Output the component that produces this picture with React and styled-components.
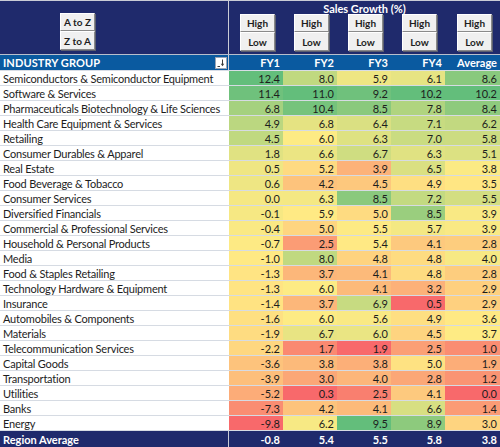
import React from "react";
import styled, { createGlobalStyle } from "styled-components";

const rows = [
  ["Semiconductors & Semiconductor Equipment", 12.4, 8.0, 5.9, 6.1, 8.6],
  ["Software & Services", 11.4, 11.0, 9.2, 10.2, 10.2],
  ["Pharmaceuticals Biotechnology & Life Sciences", 6.8, 10.4, 8.5, 7.8, 8.4],
  ["Health Care Equipment & Services", 4.9, 6.8, 6.4, 7.1, 6.2],
  ["Retailing", 4.5, 6.0, 6.3, 7.0, 5.8],
  ["Consumer Durables & Apparel", 1.8, 6.6, 6.7, 6.3, 5.1],
  ["Real Estate", 0.5, 5.2, 3.9, 6.5, 3.8],
  ["Food Beverage & Tobacco", 0.6, 4.2, 4.5, 4.9, 3.5],
  ["Consumer Services", 0.0, 6.3, 8.5, 7.2, 5.5],
  ["Diversified Financials", -0.1, 5.9, 5.0, 8.5, 3.9],
  ["Commercial & Professional Services", -0.4, 5.0, 5.5, 5.7, 3.9],
  ["Household & Personal Products", -0.7, 2.5, 5.4, 4.1, 2.8],
  ["Media", -1.0, 8.0, 4.8, 4.8, 4.0],
  ["Food & Staples Retailing", -1.3, 3.7, 4.1, 4.8, 2.8],
  ["Technology Hardware & Equipment", -1.3, 6.0, 4.1, 3.2, 2.9],
  ["Insurance", -1.4, 3.7, 6.9, 0.5, 2.9],
  ["Automobiles & Components", -1.6, 6.0, 5.6, 4.9, 3.6],
  ["Materials", -1.9, 6.7, 6.0, 4.5, 3.7],
  ["Telecommunication Services", -2.2, 1.7, 1.9, 2.5, 1.0],
  ["Capital Goods", -3.6, 3.8, 3.8, 5.0, 1.9],
  ["Transportation", -3.9, 3.0, 4.0, 2.8, 1.2],
  ["Utilities", -5.2, 0.3, 2.5, 4.1, 0.0],
  ["Banks", -7.3, 4.2, 4.1, 6.6, 1.4],
  ["Energy", -9.8, 6.2, 9.5, 8.9, 3.0],
];

const averages = [-0.8, 5.4, 5.5, 5.8, 3.8];
const columns = ["FY1", "FY2", "FY3", "FY4", "Average"];

const RED = [248, 105, 107];
const YELLOW = [255, 235, 132];
const GREEN = [99, 190, 123];

const mix = (a, b, t) =>
  `rgb(${a.map((v, i) => Math.round(v + (b[i] - v) * t)).join(",")})`;

// excel style 3-colour scale per column (min / median / max)
const scales = columns.map((_, c) => {
  const vals = rows.map((r) => r[c + 1]).sort((a, b) => a - b);
  const n = vals.length;
  const mid = n % 2 ? vals[(n - 1) / 2] : (vals[n / 2 - 1] + vals[n / 2]) / 2;
  return { min: vals[0], mid, max: vals[n - 1] };
});

const cellColor = (c, v) => {
  const { min, mid, max } = scales[c];
  if (v <= mid) return mix(RED, YELLOW, mid === min ? 1 : (v - min) / (mid - min));
  return mix(YELLOW, GREEN, (v - mid) / (max - mid));
};

const GRID = "229px 54px 54px 54px 54px 55px";
const NAVY = "#1f2a6c";
const BLUE = "#0a5aa0";

const GlobalStyle = createGlobalStyle`
  body {
    margin: 0;
    background: #fff;
    font-family: Lato, "Open Sans", sans-serif;
  }
`;

const Sheet = styled.div`
  width: 500px;
  height: 447px;
  overflow: hidden;
`;

const TopBand = styled.div`
  display: grid;
  grid-template-columns: 229px 271px;
  height: 55px;
  box-sizing: border-box;
  background: ${NAVY};
  border-top: 1px solid #c9ccd6;
  border-bottom: 1px solid #b9bfcc;
`;

const SortCell = styled.div`
  border-right: 1px solid #c9ccd6;
  padding: 12px 0 0 60px;
`;

const ButtonStack = styled.div`
  display: flex;
  flex-direction: column;
  width: 35px;
`;

const FormButton = styled.div`
  height: 18px;
  box-sizing: border-box;
  display: flex;
  align-items: center;
  justify-content: center;
  background: #f0f0f0;
  border: 1px solid;
  border-color: #ffffff #8a8a8a #8a8a8a #ffffff;
  box-shadow: 1px 1px 0 #5b5f70;
  font-size: 10px;
  font-weight: 700;
  color: #1e1e1e;
  & + & {
    height: 19px;
  }
`;

const GrowthArea = styled.div`
  display: flex;
  flex-direction: column;
`;

const Title = styled.div`
  height: 13px;
  line-height: 15px;
  text-align: center;
  color: #fff;
  font-size: 11px;
  font-weight: 700;
`;

const ButtonRow = styled.div`
  display: grid;
  grid-template-columns: 54px 54px 54px 54px 55px;
  justify-items: end;
  & > div {
    margin-right: 8px;
  }
`;

const HeadRow = styled.div`
  display: grid;
  grid-template-columns: ${GRID};
  height: 16px;
  box-sizing: border-box;
  background: ${BLUE};
  border-bottom: 1px solid #d8dde6;
  color: #fff;
  font-size: 11px;
  font-weight: 700;
`;

const HeadLabel = styled.div`
  display: flex;
  align-items: center;
  justify-content: space-between;
  padding: 0 1px 0 3px;
  border-right: 1px solid #c9ccd6;
  letter-spacing: 0.1px;
`;

const FilterButton = styled.div`
  width: 12px;
  height: 12px;
  box-sizing: border-box;
  background: #fff;
  border: 1px solid #9aa4b4;
  display: flex;
  align-items: center;
  justify-content: center;
`;

const HeadValue = styled.div`
  display: flex;
  align-items: center;
  justify-content: flex-end;
  padding-right: 3px;
`;

const Row = styled.div`
  display: grid;
  grid-template-columns: ${GRID};
  height: 15px;
  box-sizing: border-box;
  border-bottom: 1px solid #d6dbe3;
  font-size: 11px;
  color: #1d1d1d;
`;

const NameCell = styled.div`
  display: flex;
  align-items: center;
  padding-left: 3px;
  white-space: nowrap;
  overflow: hidden;
  letter-spacing: -0.2px;
  background: #fff;
`;

const ValueCell = styled.div`
  display: flex;
  align-items: center;
  justify-content: flex-end;
  padding-right: 3px;
  background: ${(p) => p.$bg};
`;

const TotalRow = styled.div`
  display: grid;
  grid-template-columns: ${GRID};
  height: 16px;
  background: ${NAVY};
  color: #fff;
  font-size: 11px;
  font-weight: 700;
`;

const TotalLabel = styled.div`
  display: flex;
  align-items: center;
  padding-left: 3px;
  border-right: 1px solid #c9ccd6;
`;

const SortIcon = () => (
  <svg width="8" height="8" viewBox="0 0 8 8">
    <path d="M0.5 7.5h2.5" stroke="#3a3a3a" strokeWidth="1" />
    <path d="M5.5 0.5v5.5" stroke="#3a3a3a" strokeWidth="1" />
    <path d="M3.8 4.8l1.7 2.4l1.7-2.4z" fill="#3a3a3a" />
  </svg>
);

const fmt = (v) => v.toFixed(1);

export default function App() {
  return (
    <Sheet>
      <GlobalStyle />
      <TopBand>
        <SortCell>
          <ButtonStack>
            <FormButton>A to Z</FormButton>
            <FormButton>Z to A</FormButton>
          </ButtonStack>
        </SortCell>
        <GrowthArea>
          <Title>Sales Growth (%)</Title>
          <ButtonRow>
            {columns.map((c) => (
              <ButtonStack key={c}>
                <FormButton>High</FormButton>
                <FormButton>Low</FormButton>
              </ButtonStack>
            ))}
          </ButtonRow>
        </GrowthArea>
      </TopBand>

      <HeadRow>
        <HeadLabel>
          INDUSTRY GROUP
          <FilterButton>
            <SortIcon />
          </FilterButton>
        </HeadLabel>
        {columns.map((c) => (
          <HeadValue key={c}>{c}</HeadValue>
        ))}
      </HeadRow>

      {rows.map(([name, ...vals]) => (
        <Row key={name}>
          <NameCell>{name}</NameCell>
          {vals.map((v, i) => (
            <ValueCell key={i} $bg={cellColor(i, v)}>
              {fmt(v)}
            </ValueCell>
          ))}
        </Row>
      ))}

      <TotalRow>
        <TotalLabel>Region Average</TotalLabel>
        {averages.map((v, i) => (
          <HeadValue key={i}>{fmt(v)}</HeadValue>
        ))}
      </TotalRow>
    </Sheet>
  );
}
